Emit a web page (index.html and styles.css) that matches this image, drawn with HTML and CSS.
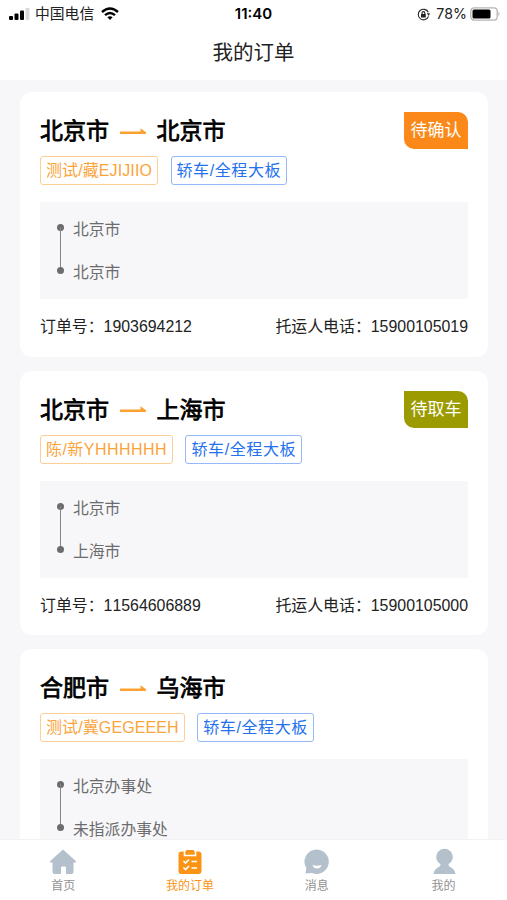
FILE: index.html
```html
<!DOCTYPE html>
<html lang="zh-CN">
<head>
    <meta charset="UTF-8">
    <meta name="viewport" content="width=device-width, initial-scale=1.0">
    <title>我的订单</title>
    <link rel="stylesheet" href="styles.css">
</head>
<body>
    <div class="app">
        <header class="header">
            <div class="status-bar">
                <div class="status-left">
                    <svg class="signal" viewBox="0 0 22 12">
                        <rect x="0" y="8" width="4" height="4" rx="1"/>
                        <rect x="5.5" y="5.5" width="4" height="6.5" rx="1"/>
                        <rect x="11" y="2.5" width="4" height="9.5" rx="1"/>
                        <rect x="16.5" y="0" width="4" height="12" rx="1" fill="#d8d8d8"/>
                    </svg>
                    <span class="carrier">中国电信</span>
                    <svg class="wifi" viewBox="0 0 18 14" fill="none" stroke="#000" stroke-width="2.4">
                        <path d="M1 5Q9 -2.2 17 5"/>
                        <path d="M4 8.2Q9 3.8 14 8.2"/>
                        <path d="M6.4 10.3Q9 8.2 11.6 10.3L9 13Z" fill="#000" stroke="none"/>
                    </svg>
                </div>
                <span class="time">11:40</span>
                <div class="status-right">
                    <svg class="lock" viewBox="0 0 13 13" fill="none" stroke="#222" stroke-width="1.1">
                        <path d="M11.3 4.2A5.3 5.3 0 1 0 11.5 8.4"/>
                        <path d="M9.8 5.2L12.9 5.3L11.8 8Z" fill="#222" stroke="none"/>
                        <rect x="4" y="6" width="4.8" height="3.6" rx=".5" fill="#222" stroke="none"/>
                        <path d="M5 6.2V5a1.4 1.4 0 0 1 2.8 0v1.2"/>
                    </svg>
                    <span class="percent">78%</span>
                    <svg class="battery" viewBox="0 0 31 14">
                        <rect x=".8" y=".8" width="26.4" height="12.4" rx="3.4" fill="#fff" stroke="#b5b5b5" stroke-width="1.3"/>
                        <rect x="2.5" y="2.5" width="18" height="9" rx="1.5"/>
                        <path d="M28.5 4.8q2 2.2 0 4.4z" fill="#aaa"/>
                    </svg>
                </div>
            </div>
            <h1>我的订单</h1>
        </header>

        <main class="order-list">
            <div class="order-card">
                <div class="card-top">
                    <div class="route">
                        <span>北京市</span>
                        <svg class="arrow" viewBox="0 0 26 8"><path d="M0 3.5H20.5V0.3L26 4.2V6H0Z"/></svg>
                        <span>北京市</span>
                    </div>
                    <span class="status status-confirm">待确认</span>
                </div>
                <div class="tags">
                    <span class="tag tag-orange">测试/藏EJIJIIO</span>
                    <span class="tag tag-blue">轿车/全程大板</span>
                </div>
                <ul class="stops">
                    <li>北京市</li>
                    <li>北京市</li>
                </ul>
                <div class="card-footer">
                    <span>订单号：1903694212</span>
                    <span>托运人电话：15900105019</span>
                </div>
            </div>

            <div class="order-card">
                <div class="card-top">
                    <div class="route">
                        <span>北京市</span>
                        <svg class="arrow" viewBox="0 0 26 8"><path d="M0 3.5H20.5V0.3L26 4.2V6H0Z"/></svg>
                        <span>上海市</span>
                    </div>
                    <span class="status status-pickup">待取车</span>
                </div>
                <div class="tags">
                    <span class="tag tag-orange tag-wide">陈/新YHHHHHH</span>
                    <span class="tag tag-blue">轿车/全程大板</span>
                </div>
                <ul class="stops">
                    <li>北京市</li>
                    <li>上海市</li>
                </ul>
                <div class="card-footer">
                    <span>订单号：11564606889</span>
                    <span>托运人电话：15900105000</span>
                </div>
            </div>

            <div class="order-card">
                <div class="card-top">
                    <div class="route">
                        <span>合肥市</span>
                        <svg class="arrow" viewBox="0 0 26 8"><path d="M0 3.5H20.5V0.3L26 4.2V6H0Z"/></svg>
                        <span>乌海市</span>
                    </div>
                </div>
                <div class="tags">
                    <span class="tag tag-orange">测试/冀GEGEEEH</span>
                    <span class="tag tag-blue">轿车/全程大板</span>
                </div>
                <ul class="stops">
                    <li>北京办事处</li>
                    <li>未指派办事处</li>
                </ul>
            </div>
        </main>

        <nav class="tab-bar">
            <a class="tab">
                <svg viewBox="0 0 28 28">
                    <path d="M14 1.5L27 13.2Q27.6 14.5 26 14.5H24.5V24Q24.5 26 22.5 26H17V19.5Q17 18.5 16 18.5H13Q12 18.5 12 19.5V26H5.5Q3.5 26 3.5 24V14.5H2Q.4 14.5 1 13.2Z"/>
                </svg>
                <span>首页</span>
            </a>
            <a class="tab active">
                <svg viewBox="0 0 28 28">
                    <rect x="2.5" y="3.5" width="23" height="22.5" rx="3"/>
                    <path d="M8.5 2V7.5H19.5V2" fill="none" stroke="#fff" stroke-width="1.6"/>
                    <rect x="9.8" y="2" width="8.4" height="4" rx="1"/>
                    <path d="M7.5 13l2 2 3.5-3.5M7.5 19.5l2 2 3.5-3.5M15.5 13.5H21M15.5 20H21" fill="none" stroke="#fff" stroke-width="1.6"/>
                </svg>
                <span>我的订单</span>
            </a>
            <a class="tab">
                <svg viewBox="0 0 28 28">
                    <path d="M14 1.5A12.2 12.2 0 1 1 9 25L2.5 25.5L3.3 20A12.2 12.2 0 0 1 14 1.5Z"/>
                    <path d="M9.5 17Q14 18.5 18.5 17Q17.5 20.5 14 20.5Q10.5 20.5 9.5 17Z" fill="#fff"/>
                </svg>
                <span>消息</span>
            </a>
            <a class="tab">
                <svg viewBox="0 0 28 28">
                    <circle cx="14.5" cy="9" r="8.3"/>
                    <path d="M10.5 15H18.5Q18 18 21 19.5Q25 21.5 25.5 26H3.5Q4 21.5 8 19.5Q11 18 10.5 15Z"/>
                </svg>
                <span>我的</span>
            </a>
        </nav>
    </div>
</body>
</html>
```
FILE: styles.css
```css
* {
    margin: 0;
    padding: 0;
    box-sizing: border-box;
}

body {
    font-family: "Liberation Sans", "Noto Sans CJK SC", sans-serif;
    font-kerning: none;
    background-color: #f7f7f9;
    color: #222;
}

.app {
    display: flex;
    flex-direction: column;
    height: 900px;
    overflow: hidden;
}

.header {
    flex: none;
    height: 80px;
    background: #fff;
}

.status-bar {
    display: grid;
    grid-template-columns: 1fr auto 1fr;
    align-items: center;
    height: 28px;
    padding: 0 6px 0 9px;
    font-family: Inter, "Noto Sans CJK SC", sans-serif;
    font-size: 14.5px;
    line-height: 28px;
}

.status-left,
.status-right {
    display: flex;
    align-items: center;
}

.status-right {
    justify-content: flex-end;
}

.signal {
    width: 22px;
    height: 12px;
    margin-right: 4px;
}

.carrier {
    font-size: 14.8px;
}

.wifi {
    width: 18px;
    height: 14px;
    margin-left: 7px;
}

.time {
    margin-right: 3px;
    font-size: 15px;
    font-weight: 600;
    color: #000;
}

.lock {
    width: 13px;
    height: 13px;
    margin-right: 6px;
}

.percent {
    font-size: 14.2px;
}

.battery {
    width: 31px;
    height: 14px;
    margin-left: 3px;
}

h1 {
    font-size: 20.5px;
    font-weight: 400;
    line-height: 49px;
    text-align: center;
}

.order-list {
    flex: 1;
    min-height: 0;
    overflow: hidden;
    padding: 12px 19px 0 20px;
}

.order-card {
    height: 264.5px;
    margin-bottom: 14px;
    padding: 20px;
    background: #fff;
    border-radius: 12px;
}

.card-top {
    display: flex;
    justify-content: space-between;
    height: 37px;
}

.route {
    display: flex;
    align-items: center;
    font-size: 23px;
    line-height: 37px;
    padding-top: 2px;
    color: #000;
    -webkit-text-stroke: 0.8px #000;
}

.arrow {
    width: 26px;
    height: 8px;
    margin: 0 11px 0 10.5px;
    fill: #fca130;
}

.status {
    width: 64px;
    font-size: 17px;
    line-height: 38px;
    text-align: center;
    color: #fff;
    border-radius: 0 10px 0 10px;
}

.status-confirm {
    background: #fa8919;
}

.status-pickup {
    background: #9b9b00;
}

.tags {
    display: flex;
    gap: 12.5px;
    margin-top: 7px;
}

.tag {
    height: 29px;
    padding: 0 5px;
    font-size: 16px;
    line-height: 28px;
    white-space: nowrap;
    border: 1px solid;
    border-radius: 3px;
}

.tag-orange {
    color: #fba43a;
    border-color: #fdcf96;
    letter-spacing: 0.1px;
}

.tag-blue {
    color: #2471ee;
    border-color: #94b8f8;
    letter-spacing: 0.6px;
}

.tag-wide {
    letter-spacing: 0.45px;
}

.stops {
    height: 97px;
    margin-top: 17px;
    padding: 6px 17px 4px;
    list-style: none;
    background: #f7f7f9;
}

.stops li {
    position: relative;
    padding-left: 16px;
    font-size: 15.8px;
    line-height: 43px;
    color: #6c6c6e;
}

.stops li::before {
    content: "";
    position: absolute;
    left: 0;
    top: 16px;
    width: 7px;
    height: 7px;
    border-radius: 50%;
    background: #6c6c6e;
}

.stops li:first-child::after {
    content: "";
    position: absolute;
    left: 3px;
    top: 19px;
    width: 1px;
    height: 43px;
    background: #858587;
}

.card-footer {
    display: flex;
    justify-content: space-between;
    margin-top: 16px;
    font-size: 15.9px;
    line-height: 24px;
}

.tab-bar {
    flex: none;
    display: flex;
    height: 61px;
    background: #fff;
    border-top: 1px solid #f2f2f3;
}

.tab {
    flex: 1;
    display: flex;
    flex-direction: column;
    align-items: center;
    padding-top: 8px;
    font-size: 12px;
    line-height: 20px;
    color: #929292;
}

.tab svg {
    width: 28px;
    height: 28px;
    fill: #b4c0cb;
}

.tab.active {
    color: #fb9414;
}

.tab.active svg {
    fill: #fb9414;
}
```
